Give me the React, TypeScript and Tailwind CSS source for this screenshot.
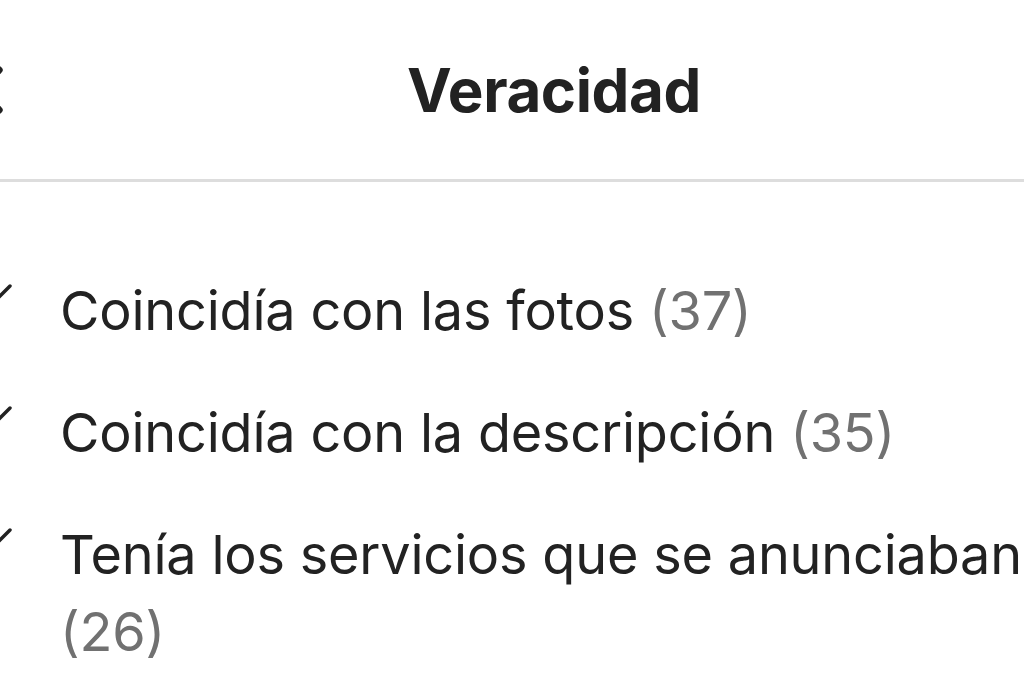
import { ChevronLeft, Check } from 'lucide-react'

const items = [
  { label: 'Coincidía con las fotos', count: 37 },
  { label: 'Coincidía con la descripción', count: 35 },
  { label: 'Tenía los servicios que se anunciaban', count: 26 },
]

export default function App() {
  return (
    <div
      className="w-[1024px] h-[683px] overflow-hidden bg-white text-[#222222]"
      style={{ fontFamily: 'Inter, "Noto Sans", sans-serif' }}
    >
      <header className="relative flex h-[182px] items-center justify-center border-b-[3px] border-[#dddddd] pl-[84px]">
        <button aria-label="Volver" className="absolute left-[-51px] top-[50px] h-[80px] w-[80px]">
          <ChevronLeft className="h-full w-full" strokeWidth={2.2} />
        </button>
        <h1 className="text-[60px] font-bold tracking-[-0.4px]">Veracidad</h1>
      </header>

      <ul className="flex flex-col gap-[45px] pt-[90px]">
        {items.map((item) => (
          <li key={item.label} className="flex items-start">
            <Check className="ml-[-20px] mt-[5px] h-[36px] w-[36px] shrink-0" strokeWidth={2.3} />
            <p className="ml-[44px] w-[1000px] shrink-0 text-[54px] leading-[77px] tracking-[-0.2px]">
              {item.label} <span className="text-[#717171]">({item.count})</span>
            </p>
          </li>
        ))}
      </ul>
    </div>
  )
}
